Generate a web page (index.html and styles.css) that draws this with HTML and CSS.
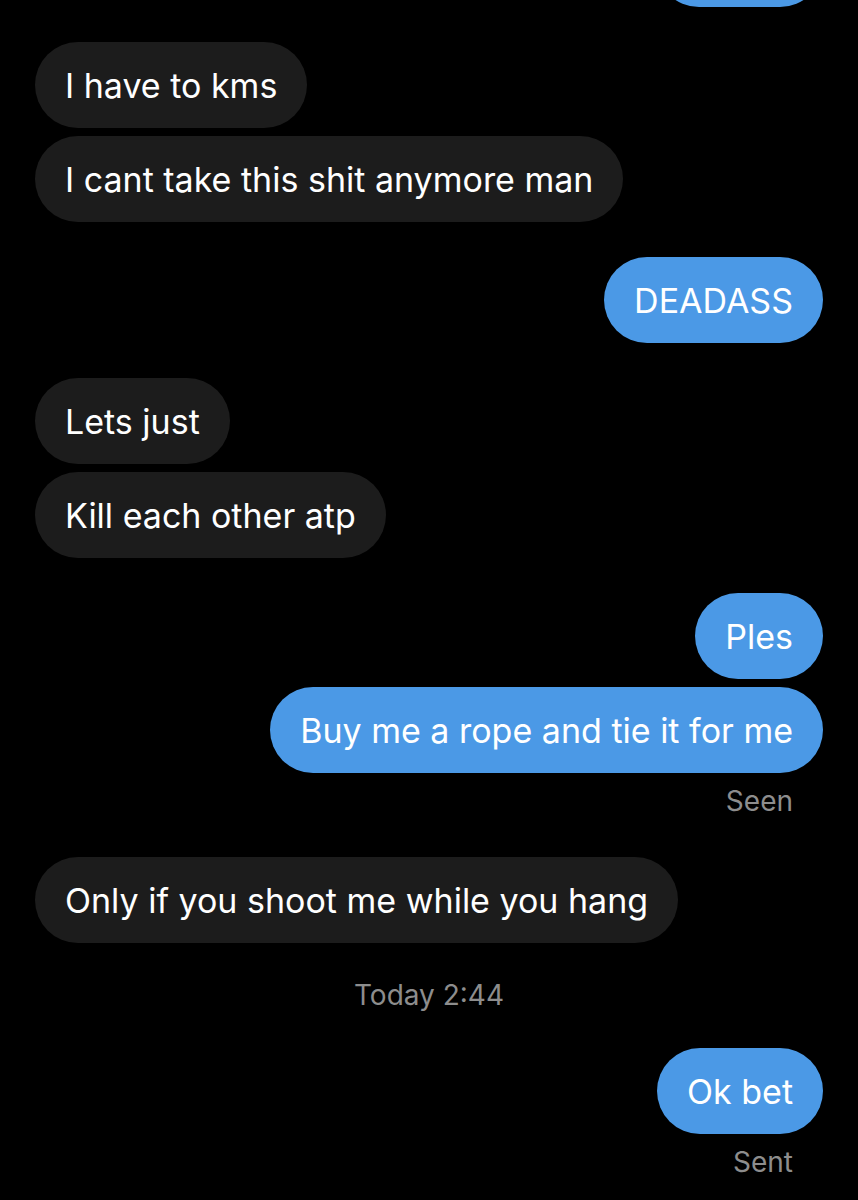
FILE: index.html
```html
<!DOCTYPE html>
<html lang="en">
<head>
    <meta charset="UTF-8">
    <meta name="viewport" content="width=device-width, initial-scale=1.0">
    <title>Messages</title>
    <link rel="stylesheet" href="styles.css">
</head>
<body>
    <div class="thread">
        <div class="group sent cut">
            <div class="bubble blue stub"></div>
        </div>

        <div class="group received">
            <div class="bubble grey">I have to kms</div>
            <div class="bubble grey">I cant take this shit anymore man</div>
        </div>

        <div class="group sent">
            <div class="bubble blue">DEADASS</div>
        </div>

        <div class="group received">
            <div class="bubble grey">Lets just</div>
            <div class="bubble grey">Kill each other atp</div>
        </div>

        <div class="group sent">
            <div class="bubble blue">Ples</div>
            <div class="bubble blue">Buy me a rope and tie it for me</div>
            <div class="status">Seen</div>
        </div>

        <div class="group received">
            <div class="bubble grey">Only if you shoot me while you hang</div>
        </div>

        <div class="timestamp">Today 2:44</div>

        <div class="group sent">
            <div class="bubble blue">Ok bet</div>
            <div class="status">Sent</div>
        </div>
    </div>
</body>
</html>
```

FILE: styles.css
```css
body {
    margin: 0;
    padding: 0;
    background: #000;
    font-family: 'Inter', 'Liberation Sans', sans-serif;
    color: #fff;
    overflow: hidden;
}
.thread {
    display: flex;
    flex-direction: column;
    gap: 35px;
    padding: 0 35px;
}
.group {
    display: flex;
    flex-direction: column;
    gap: 8px;
}
.group.received {
    align-items: flex-start;
}
.group.sent {
    align-items: flex-end;
}
.group.cut {
    margin-top: -79px;
}
.bubble {
    height: 86px;
    line-height: 88px;
    padding: 0 30px;
    border-radius: 43px;
    font-size: 34px;
    letter-spacing: 0;
    white-space: nowrap;
}
.bubble.grey {
    background: #1c1c1c;
}
.bubble.blue {
    background: #4b99e6; /* sent blue */
}
.bubble.stub {
    width: 107px;
}
.status {
    margin: 4px 30px 5px 0;
    font-size: 28px;
    line-height: 32px;
    color: #8d8d8d;
}
.timestamp {
    text-align: center;
    font-size: 28px;
    line-height: 32px;
    color: #8d8d8d;
    margin: 1px 0 2px;
}
```
